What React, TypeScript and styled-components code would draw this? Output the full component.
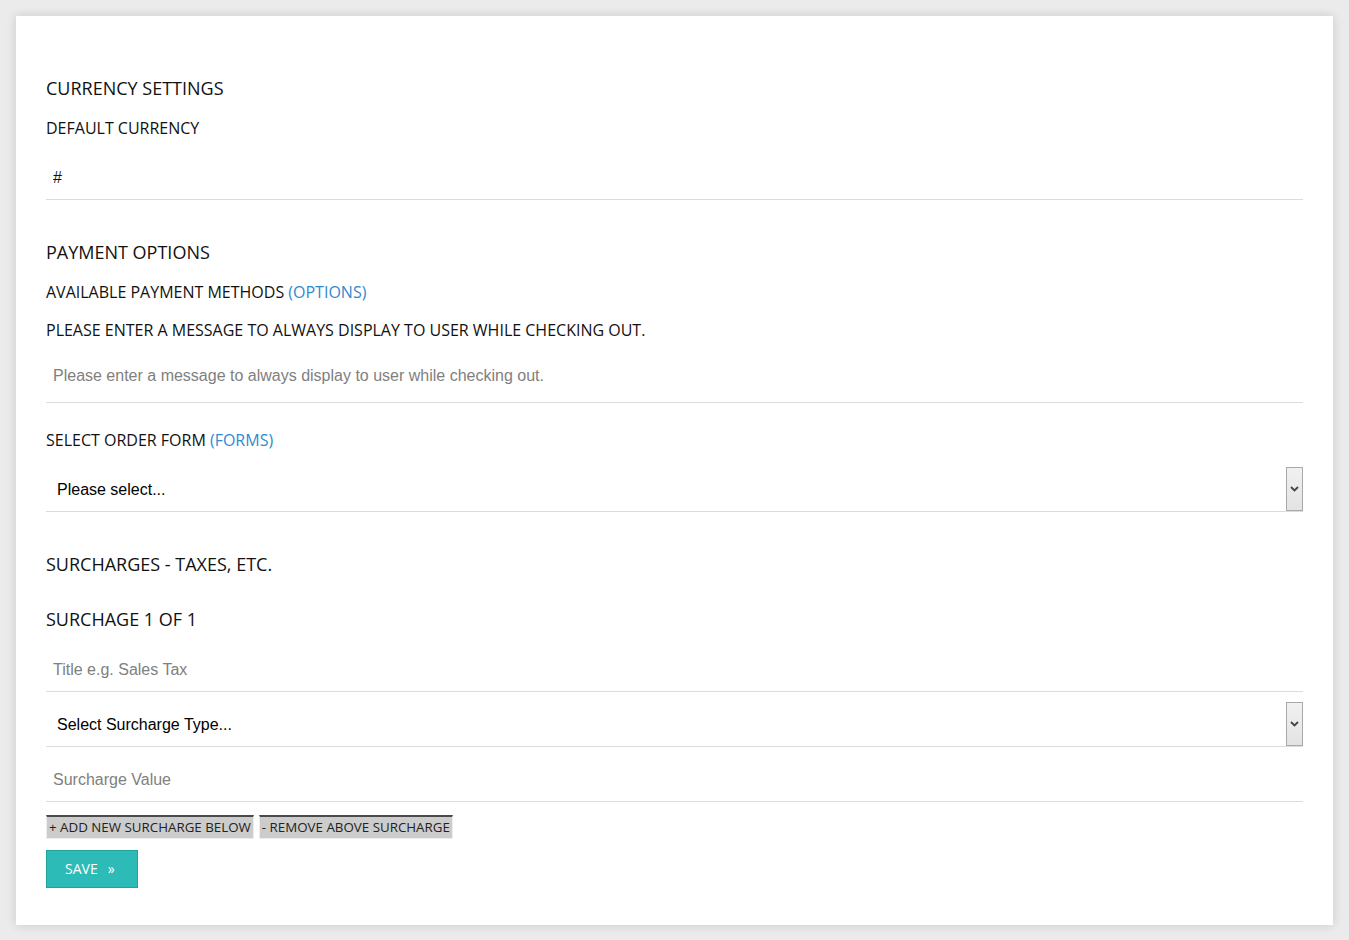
import React from 'react';
import styled, { createGlobalStyle } from 'styled-components';

const GlobalStyle = createGlobalStyle`
  * {
    box-sizing: border-box;
  }
  body {
    margin: 0;
    background: #ebebeb;
    font-family: 'Open Sans', 'Liberation Sans', sans-serif;
    color: #111;
  }
`;

const App = () => {
  return (
    <>
      <GlobalStyle />
      <Page>
        <Card>
          <SectionTitle $top={58}>CURRENCY SETTINGS</SectionTitle>
          <Label $top={15}>DEFAULT CURRENCY</Label>
          <TextInput defaultValue='#' $top={15} />

          <SectionTitle $top={38}>PAYMENT OPTIONS</SectionTitle>
          <Label $top={15}>
            AVAILABLE PAYMENT METHODS <LinkText href='#'>(OPTIONS)</LinkText>
          </Label>
          <Label>PLEASE ENTER A MESSAGE TO ALWAYS DISPLAY TO USER WHILE CHECKING OUT.</Label>
          <TextArea rows={1} placeholder='Please enter a message to always display to user while checking out.' />

          <Label $top={25}>
            SELECT ORDER FORM <LinkText href='#'>(FORMS)</LinkText>
          </Label>
          <Select $top={15} label='Please select...' />

          <SectionTitle $top={38}>SURCHARGES - TAXES, ETC.</SectionTitle>
          <SectionTitle $top={28}>SURCHAGE 1 OF 1</SectionTitle>
          <TextInput placeholder='Title e.g. Sales Tax' $top={15} />
          <Select $top={10} label='Select Surcharge Type...' />
          <TextInput placeholder='Surcharge Value' $top={10} />

          <ButtonRow>
            <GrayButton>+ ADD NEW SURCHARGE BELOW</GrayButton>
            <GrayButton>- REMOVE ABOVE SURCHARGE</GrayButton>
          </ButtonRow>
          <SaveButton>
            SAVE<Raquo>»</Raquo>
          </SaveButton>
        </Card>
      </Page>
    </>
  );
};

const Select = ({ label, $top }: { label: string; $top: number }) => {
  return (
    <SelectRow $top={$top}>
      <NativeSelect defaultValue=''>
        <option value=''>{label}</option>
      </NativeSelect>
      <ArrowBox>
        <svg width='9' height='6' viewBox='0 0 9 6'>
          <path d='M1 1 L4.5 4.5 L8 1' fill='none' stroke='#444' strokeWidth='1.8' />
        </svg>
      </ArrowBox>
    </SelectRow>
  );
};

export default App;

const Page = styled.div`
  padding: 16px 16px 15px 16px;
`;

const Card = styled.div`
  display: flex;
  flex-direction: column;
  align-items: stretch;
  background: #fff;
  padding: 0 30px 37px 30px;
  box-shadow: 0 0 10px rgba(0, 0, 0, 0.14);
`;

const SectionTitle = styled.h2<{ $top?: number }>`
  margin: ${(p) => p.$top ?? 0}px 0 0 0;
  padding-top: 2px;
  font-size: 18px;
  line-height: 25px;
  font-weight: 400;
  color: #111;
`;

const Label = styled.div<{ $top?: number }>`
  margin-top: ${(p) => p.$top ?? 14}px;
  font-size: 16px;
  line-height: 24px;
  color: #111;
`;

const LinkText = styled.a`
  color: #2f8ad0;
  text-decoration: none;
`;

const TextInput = styled.input<{ $top?: number }>`
  display: block;
  width: 100%;
  height: 45px;
  margin-top: ${(p) => p.$top ?? 0}px;
  padding: 2px 7px 0 7px;
  border: none;
  border-bottom: 1px solid #dcdcdc;
  outline: none;
  font-family: 'Liberation Sans', Arial, sans-serif;
  font-size: 16px;
  color: #111;
  &::placeholder {
    color: #808080;
  }
`;

const TextArea = styled.textarea`
  display: block;
  width: 100%;
  height: 45px;
  margin-top: 16px;
  padding: 9px 7px 7px 7px;
  border: none;
  border-bottom: 1px solid #dcdcdc;
  outline: none;
  resize: none;
  font-family: 'Liberation Sans', Arial, sans-serif;
  font-size: 16px;
  line-height: 18px;
  color: #111;
  &::placeholder {
    color: #808080;
  }
`;

const SelectRow = styled.div<{ $top: number }>`
  display: flex;
  align-items: stretch;
  height: 45px;
  margin-top: ${(p) => p.$top}px;
  border-bottom: 1px solid #dcdcdc;
`;

const NativeSelect = styled.select`
  flex: 1;
  appearance: none;
  border: none;
  outline: none;
  background: #fff;
  padding: 0 11px;
  font-family: 'Liberation Sans', Arial, sans-serif;
  font-size: 16px;
  color: #000;
`;

const ArrowBox = styled.span`
  display: flex;
  align-items: center;
  justify-content: center;
  width: 17px;
  border: 1px solid #a9a9a9;
  background: linear-gradient(#f1f1f1, #e3e3e3);
`;

const ButtonRow = styled.div`
  display: flex;
  gap: 5px;
  margin-top: 13px;
`;

const GrayButton = styled.button`
  height: 24px;
  padding: 0 2px 1px 2px;
  background: #cccccc;
  border: 1px solid #ededed;
  border-top: 2px solid #4a4a4a;
  font-family: 'Open Sans', sans-serif;
  font-size: 13.33px;
  color: #222;
  cursor: pointer;
`;

const SaveButton = styled.button`
  align-self: flex-start;
  width: 92px;
  height: 38px;
  margin-top: 11px;
  padding: 0 0 1px 18px;
  text-align: left;
  background: #2cbbb7;
  border: 1px solid #22a39e;
  font-family: 'Open Sans', sans-serif;
  font-size: 14px;
  color: #fff;
  cursor: pointer;
`;

const Raquo = styled.span`
  margin-left: 10px;
`;
